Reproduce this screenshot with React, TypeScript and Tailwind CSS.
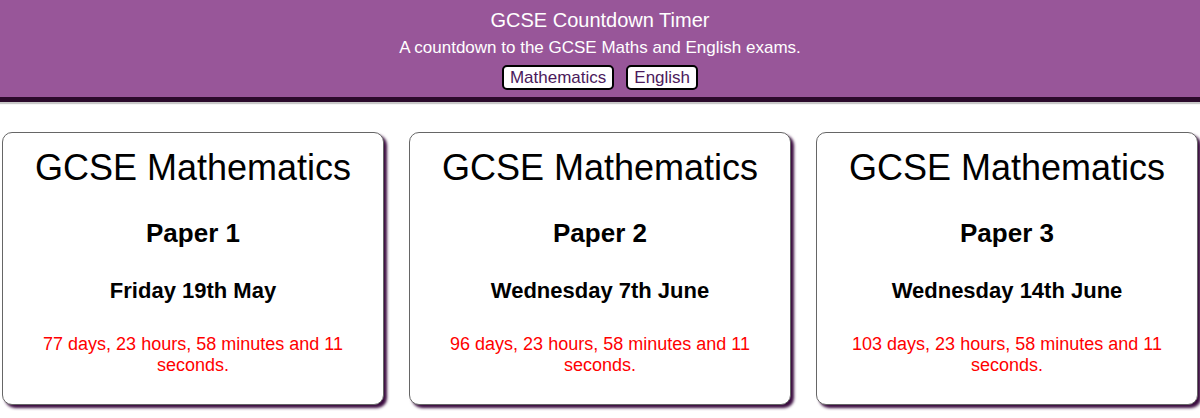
const papers = [
  {
    paper: "Paper 1",
    date: "Friday 19th May",
    left: "77 days, 23 hours, 58 minutes and 11 seconds.",
  },
  {
    paper: "Paper 2",
    date: "Wednesday 7th June",
    left: "96 days, 23 hours, 58 minutes and 11 seconds.",
  },
  {
    paper: "Paper 3",
    date: "Wednesday 14th June",
    left: "103 days, 23 hours, 58 minutes and 11 seconds.",
  },
];

export default function App() {
  return (
    <div className="min-h-[418px] bg-white font-['Liberation_Sans',Arial,sans-serif]">
      <header className="h-[102px] border-b-[5px] border-[#2b0a2b] bg-[#985699] pt-[8px] text-center text-white shadow-[0_2px_1px_#c8c8c8]">
        <h1 className="text-[20px] leading-[24px]">GCSE Countdown Timer</h1>
        <p className="mt-[6px] text-[17px] leading-[20px]">
          A countdown to the GCSE Maths and English exams.
        </p>
        <nav className="mt-[7px] flex justify-center gap-[12px]">
          <button
            type="button"
            className="rounded-[5px] border-2 border-black bg-white px-[6px] text-[17px] leading-[21px] text-[#4b1a5c]"
          >
            Mathematics
          </button>
          <button
            type="button"
            className="rounded-[5px] border-2 border-black bg-white px-[6px] text-[17px] leading-[21px] text-[#4b1a5c]"
          >
            English
          </button>
        </nav>
      </header>

      <main className="flex gap-[25px] px-[2px] pt-[30px]">
        {papers.map((item) => (
          <article
            key={item.paper}
            className="flex h-[273px] flex-1 flex-col items-center rounded-[10px] border border-[#666] bg-white px-[20px] pt-[10px] text-center shadow-[3px_3px_3px_#3a0b3f]"
          >
            <h2 className="text-[36px] leading-[50px] text-black">
              GCSE Mathematics
            </h2>
            <h3 className="mt-[25px] text-[26px] font-bold leading-[30px] text-black">
              {item.paper}
            </h3>
            <h4 className="mt-[30px] text-[22px] font-bold leading-[26px] text-black">
              {item.date}
            </h4>
            <p className="mt-[30px] px-[10px] text-[18px] leading-[21px] text-[#ff0000]">
              {item.left}
            </p>
          </article>
        ))}
      </main>
    </div>
  );
}
